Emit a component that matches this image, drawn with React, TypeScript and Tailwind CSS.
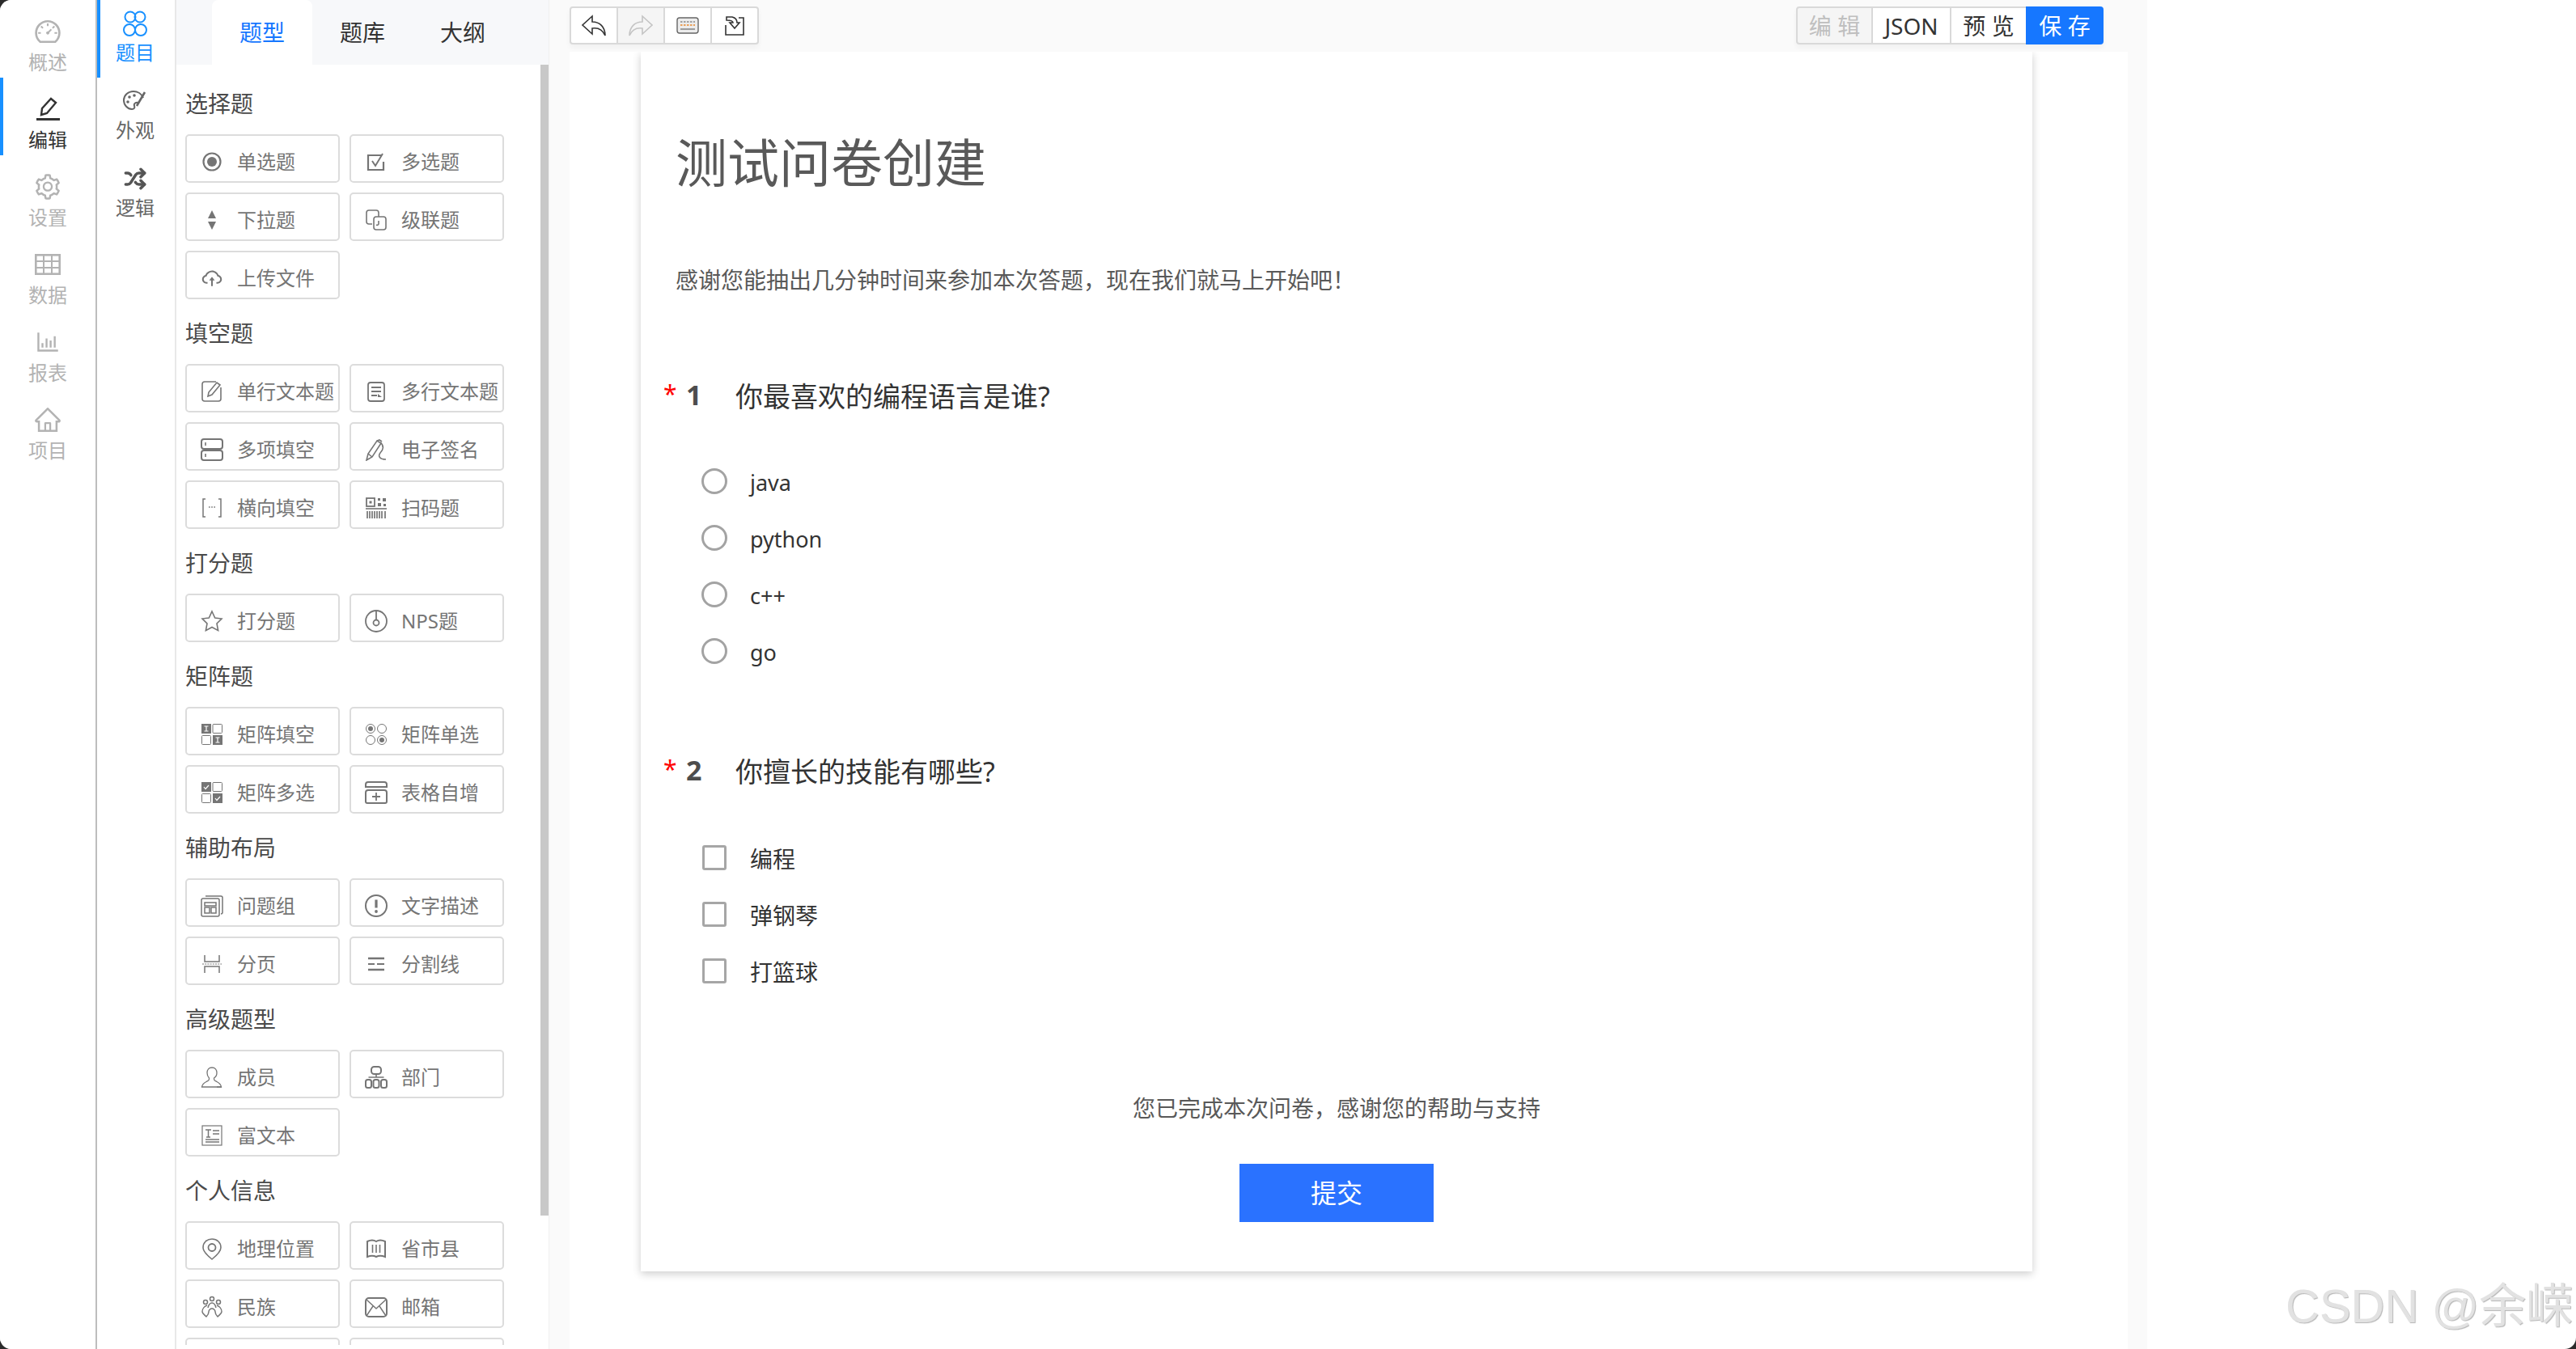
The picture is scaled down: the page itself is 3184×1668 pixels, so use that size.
import type { ReactNode } from 'react'
import {
  AiOutlineBarChart,
  AiOutlineCloudUpload,
  AiOutlineDashboard,
  AiOutlineHome,
  AiOutlineSetting,
} from 'react-icons/ai'
import { Shuffle } from 'lucide-react'

const g = '#757575'

const icons: Record<string, ReactNode> = {
  radio: (
    <>
      <circle cx="14" cy="14" r="10.5" strokeWidth="2.2" />
      <circle cx="14" cy="14" r="6" fill={g} stroke="none" />
    </>
  ),
  check: (
    <>
      <path d="M20 6H4v18h19V14" strokeWidth="2.2" />
      <path d="M9 13l4 6 9-15" strokeWidth="2" />
    </>
  ),
  select: <path d="M14 2l5 10H9zM14 26l5-10H9z" fill={g} stroke="none" />,
  cascade: (
    <>
      <path d="M9 19H5a3 3 0 0 1-3-3V5a3 3 0 0 1 3-3h9a3 3 0 0 1 3 3v5" />
      <rect x="11" y="10" width="15" height="16" rx="3" />
      <path d="M17 15v4a2 2 0 0 1-3 1" />
    </>
  ),
  pen: (
    <>
      <path d="M19 2H5a3 3 0 0 0-3 3v18a3 3 0 0 0 3 3h17a3 3 0 0 0 3-3V9" />
      <path d="M9 20l1-5L20 3l4 3-10 12z" />
    </>
  ),
  lines: (
    <>
      <rect x="4" y="3" width="20" height="23" rx="3" strokeWidth="1.8" />
      <path d="M8 9h12M8 14h12M8 19h7" strokeWidth="1.8" />
      <path d="M16 21h5l-5-4z" fill={g} stroke="none" />
    </>
  ),
  multi: (
    <>
      <rect x="1" y="1" width="26" height="12" rx="3" strokeWidth="2" />
      <rect x="1" y="15" width="26" height="12" rx="3" strokeWidth="2" />
      <path d="M6 5v4M6 19v4" />
    </>
  ),
  sign: (
    <>
      <path d="M2 27l2-8L15 3l5 3L9 23z" />
      <path d="M15 3l3-1 3 2M4 19l5 4" />
      <path d="M19 5c5 4 4 9 0 13-3 4-1 8 7 8" />
    </>
  ),
  blank: (
    <>
      <path d="M6 3H3v22h3M22 3h3v22h-3" strokeWidth="1.5" />
      <path d="M10 13h1.6M13.2 13h1.6M16.4 13h1.6" strokeWidth="1.6" />
    </>
  ),
  scan: (
    <>
      <rect x="2" y="2" width="10" height="10" strokeWidth="1.8" />
      <rect x="5.5" y="5.5" width="3" height="3" fill={g} stroke="none" />
      <path d="M16 2h3v3h-3zM22 2h4v4h-4zM16 8h4v4h-4zM23 9h3v3h-3z" fill={g} stroke="none" />
      <path d="M1 15h26" strokeWidth="1.6" />
      <path d="M3 18v9M6 18v9M9 18v9M12 18v9M15 18v9M18 18v9M21 18v9M25 18v9" strokeWidth="1.7" />
    </>
  ),
  star: <path d="M14 2l3.7 8 8.3 1-6 6 1.6 8.6L14 21.5 6.4 25.6 8 17l-6-6 8.3-1z" />,
  nps: (
    <>
      <circle cx="14" cy="14" r="13" strokeWidth="1.8" />
      <circle cx="14" cy="16" r="3.5" strokeWidth="1.8" />
      <path d="M14 1v11" strokeWidth="1.8" />
    </>
  ),
  mfill: (
    <>
      <rect x="1" y="1" width="12" height="12" fill={g} stroke="none" />
      <rect x="15" y="1.5" width="11.5" height="11" rx="1" strokeWidth="1" />
      <rect x="1.5" y="15.5" width="11" height="11" rx="1" strokeWidth="1" />
      <rect x="15" y="15" width="12" height="12" fill={g} stroke="none" />
      <path d="M4.5 4h5M7 4v6M4.5 10h5M18.5 18h5M21 18v6M18.5 24h5" stroke="#fff" strokeWidth="1.2" />
    </>
  ),
  mradio: (
    <>
      <circle cx="7" cy="7" r="5.5" strokeWidth="1" />
      <circle cx="7" cy="7" r="3" fill={g} stroke="none" />
      <circle cx="21" cy="7" r="5.5" strokeWidth="1" />
      <circle cx="7" cy="21" r="5.5" strokeWidth="1" />
      <circle cx="21" cy="21" r="5.5" strokeWidth="1" />
      <circle cx="21" cy="21" r="3" fill={g} stroke="none" />
    </>
  ),
  mcheck: (
    <>
      <rect x="1" y="1" width="12" height="12" fill={g} stroke="none" />
      <rect x="15" y="1.5" width="11.5" height="11" rx="1" strokeWidth="1" />
      <rect x="1.5" y="15.5" width="11" height="11" rx="1" strokeWidth="1" />
      <rect x="15" y="15" width="12" height="12" fill={g} stroke="none" />
      <path d="M4 7l2 2.5L10 5M18 21l2 2.5L24 19" stroke="#fff" strokeWidth="1.2" />
    </>
  ),
  grow: (
    <>
      <path d="M1 7V4a3 3 0 0 1 3-3h20a3 3 0 0 1 3 3v3z" strokeWidth="2" />
      <path d="M4 11h20a3 3 0 0 1 3 3v11a2 2 0 0 1-2 2H3a2 2 0 0 1-2-2V14a3 3 0 0 1 3-3z" strokeWidth="2" />
      <path d="M14 14v10M9 19h10" strokeWidth="1.8" />
    </>
  ),
  group: (
    <>
      <rect x="1" y="5" width="22" height="22" rx="2" strokeWidth="1.5" />
      <path d="M6 2h19a2 2 0 0 1 2 2v18a2 2 0 0 1-2 2" strokeWidth="1.5" />
      <path d="M5 10h14v4H5zM5 16h6v7H5zM13 16h6v7h-6z" strokeWidth="1.5" />
    </>
  ),
  notice: (
    <>
      <circle cx="14" cy="14" r="13" strokeWidth="2" />
      <path d="M14 6.5v10" strokeWidth="3.2" />
      <circle cx="14" cy="21" r="1.9" fill={g} stroke="none" />
    </>
  ),
  page: (
    <>
      <path d="M5 3v8h18V3M5 25v-8h18v8" strokeWidth="1.5" />
      <path d="M2 14h24" strokeWidth="1.2" strokeDasharray="2 1.2" />
    </>
  ),
  divider: (
    <>
      <path d="M4 7h20M4 21h20" strokeWidth="2.4" />
      <path d="M4 14h8M15 14h9" strokeWidth="2" />
    </>
  ),
  user: (
    <>
      <path d="M14 2c-4 0-6 3-6 6.500 0 3 1 5 2.500 6.500 0 3-.5 3-3.500 4.500-3 1.500-5 3-5.500 6.500h24c-.5-3.500-2.500-5-5.500-6.500-3-1.500-3.500-1.500-3.500-4.500C19 13.500 20 11.500 20 8.500 20 5 18 2 14 2z" strokeWidth="1.3" />
      <path d="M20 26h6" strokeWidth="1.3" />
    </>
  ),
  dept: (
    <>
      <rect x="8" y="1" width="12" height="9" rx="3.500" strokeWidth="2" />
      <path d="M4.500 14h19M14 10v4" strokeWidth="1.6" />
      <rect x="1" y="17" width="7" height="10" rx="2.500" strokeWidth="2" />
      <rect x="10.500" y="17" width="7" height="10" rx="2.500" strokeWidth="2" />
      <rect x="20" y="17" width="7" height="10" rx="2.500" strokeWidth="2" />
    </>
  ),
  rich: (
    <>
      <rect x="2" y="2" width="24" height="24" strokeWidth="1.2" />
      <path d="M6 7h7M9.500 7v9M7 16h5M15 8h8M15 12h8M6 19h17M6 22h17" strokeWidth="1.5" />
    </>
  ),
  pin: (
    <>
      <path d="M14 2C7.500 2 3 6.500 3 12.500 3 18 9 23 14 27c5-4 11-9 11-14.500C25 6.500 20.500 2 14 2z" strokeWidth="1.6" />
      <circle cx="14" cy="12.500" r="4.500" strokeWidth="1.8" />
    </>
  ),
  map: (
    <>
      <path d="M3 24V5c4-2 8-2 11 0 3-2 7-2 11 0v19c-4-1.500-8-1.500-11 0-3-1.500-7-1.500-11 0z" strokeWidth="2" />
      <path d="M9.500 9v10M14 9v10M18.500 9v10" strokeWidth="1.6" />
    </>
  ),
  people: (
    <>
      <circle cx="14" cy="4" r="2.500" strokeWidth="1.500" />
      <circle cx="6" cy="8" r="2.500" strokeWidth="1.500" />
      <circle cx="22" cy="8" r="2.500" strokeWidth="1.500" />
      <path d="M9 15c1-4 3-6 5-6s4 2 5 6" strokeWidth="1.500" />
      <path d="M8 12c-3 1-6 4-6 8 0 2 2 3 5 6 2-2 3-3 3-6 0-2 2-4 4-4s4 2 4 4c0 3 1 4 3 6 3-3 5-4 5-6 0-4-3-7-6-8" strokeWidth="1.500" />
    </>
  ),
  mail: (
    <>
      <rect x="1" y="3" width="26" height="23" rx="4" strokeWidth="2" />
      <path d="M2 5l12 11L26 5M2 25l8-12M26 25l-8-12" strokeWidth="1.5" />
    </>
  ),
}

function Ico({ name }: { name: string }) {
  if (!name) return null
  if (name === 'cloud') {
    return (
      <span className="w-[28px] h-[28px] flex items-center justify-center shrink-0">
        <AiOutlineCloudUpload size={28} color={g} />
      </span>
    )
  }
  return (
    <svg width="28" height="28" viewBox="0 0 28 28" fill="none" stroke={g} strokeWidth="1.6" className="shrink-0">
      {icons[name]}
    </svg>
  )
}

const sections: { title: string; items: [string, string][] }[] = [
  {
    title: '选择题',
    items: [
      ['单选题', 'radio'],
      ['多选题', 'check'],
      ['下拉题', 'select'],
      ['级联题', 'cascade'],
      ['上传文件', 'cloud'],
    ],
  },
  {
    title: '填空题',
    items: [
      ['单行文本题', 'pen'],
      ['多行文本题', 'lines'],
      ['多项填空', 'multi'],
      ['电子签名', 'sign'],
      ['横向填空', 'blank'],
      ['扫码题', 'scan'],
    ],
  },
  {
    title: '打分题',
    items: [
      ['打分题', 'star'],
      ['NPS题', 'nps'],
    ],
  },
  {
    title: '矩阵题',
    items: [
      ['矩阵填空', 'mfill'],
      ['矩阵单选', 'mradio'],
      ['矩阵多选', 'mcheck'],
      ['表格自增', 'grow'],
    ],
  },
  {
    title: '辅助布局',
    items: [
      ['问题组', 'group'],
      ['文字描述', 'notice'],
      ['分页', 'page'],
      ['分割线', 'divider'],
    ],
  },
  {
    title: '高级题型',
    items: [
      ['成员', 'user'],
      ['部门', 'dept'],
      ['富文本', 'rich'],
    ],
  },
  {
    title: '个人信息',
    items: [
      ['地理位置', 'pin'],
      ['省市县', 'map'],
      ['民族', 'people'],
      ['邮箱', 'mail'],
      // the next row is scrolled off, only its top border shows
      ['', ''],
      ['', ''],
    ],
  },
]

function MainNav() {
  const c = '#b3b3b3'
  const items: { label: string; icon: ReactNode; active?: boolean }[] = [
    { label: '概述', icon: <AiOutlineDashboard size={36} color={c} /> },
    {
      label: '编辑',
      active: true,
      icon: (
        <svg width="32" height="32" viewBox="0 0 32 32" fill="none" stroke="#333" strokeWidth="2.4">
          <path d="M8 23l1-8L20 3l6 5-11 13z" />
          <path d="M2 28.500h29" strokeWidth="2.800" />
        </svg>
      ),
    },
    { label: '设置', icon: <AiOutlineSetting size={36} color={c} /> },
    {
      label: '数据',
      icon: (
        <svg width="32" height="26" viewBox="0 0 32 26" fill="none" stroke={c} strokeWidth="2.600">
          <rect x="1.300" y="1.300" width="29.400" height="23.400" />
          <path d="M1 9h30M1 17h30M11 1v24M21 1v24" strokeWidth="2" />
        </svg>
      ),
    },
    { label: '报表', icon: <AiOutlineBarChart size={34} color={c} /> },
    { label: '项目', icon: <AiOutlineHome size={36} color={c} /> },
  ]
  return (
    <div className="w-[120px] shrink-0 border-r-2 border-[#bdbdbd] bg-white">
      {items.map((it) => (
        <div
          key={it.label}
          className={`h-24 flex flex-col items-center pt-[23px] border-l-4 pr-1 ${
            it.active ? 'border-[#1890ff] text-[#333]' : 'border-transparent text-[#b3b3b3]'
          }`}
        >
          <div className="h-8 flex items-center justify-center">{it.icon}</div>
          <div className="mt-[6px] text-[24px] leading-8">{it.label}</div>
        </div>
      ))}
    </div>
  )
}

function SubNav() {
  return (
    <div className="w-[98px] shrink-0 border-r-2 border-[#e8e8e8] bg-white">
      <div className="h-24 flex flex-col items-center pt-[13px] border-l-4 border-[#1890ff] pr-[6px] text-[#1890ff]">
        <svg width="32" height="32" viewBox="0 0 32 32" fill="none" stroke="#1890ff" strokeWidth="2">
          <circle cx="10" cy="8" r="6.500" />
          <circle cx="22" cy="8" r="6.500" />
          <circle cx="9" cy="24" r="7" />
          <circle cx="23" cy="24" r="7" />
        </svg>
        <div className="mt-1 text-[24px] leading-8">题目</div>
      </div>
      <div className="h-24 flex flex-col items-center pt-[13px] pl-1 pr-[6px] text-[#666]">
        <svg width="32" height="32" viewBox="0 0 32 32" fill="none" stroke="#666" strokeWidth="2">
          <path d="M26 12C24 7 19 4 14 4 7 4 2 9 2 15c0 6 5 11 10 11 3 0 4-2 3-4-1-3 2-5 5-4" />
          <path d="M28 5L18 22" strokeWidth="2.600" />
          <circle cx="9" cy="11" r="1.800" fill="#666" stroke="none" />
          <circle cx="15" cy="9" r="1.800" fill="#666" stroke="none" />
          <circle cx="7" cy="17" r="1.800" fill="#666" stroke="none" />
        </svg>
        <div className="mt-1 text-[24px] leading-8">外观</div>
      </div>
      <div className="h-24 flex flex-col items-center pt-[13px] pl-1 pr-[6px] text-[#666]">
        <div className="h-8 flex items-center justify-center">
          <Shuffle size={28} color="#555" strokeWidth={3} />
        </div>
        <div className="mt-1 text-[24px] leading-8">逻辑</div>
      </div>
    </div>
  )
}

function Palette() {
  return (
    <div className="w-[460px] shrink-0 flex flex-col bg-white">
      <div className="h-20 flex bg-[#f7f8fa] pl-[44px] shrink-0">
        <div className="w-[124px] flex items-center justify-center bg-white rounded-t-[8px] text-[#1677ff] text-[28px]">题型</div>
        <div className="w-[124px] flex items-center justify-center text-[#333] text-[28px]">题库</div>
        <div className="w-[124px] flex items-center justify-center text-[#333] text-[28px]">大纲</div>
      </div>
      <div className="flex items-start h-[1583px] overflow-hidden">
        <div className="w-[450px] shrink-0 pl-[11px] pt-[6px]">
          {sections.map((s) => (
            <div key={s.title}>
              <div className="h-20 flex items-center pt-1 text-[28px] leading-9 text-[#4a4a4a]">{s.title}</div>
              <div className="grid grid-cols-[191px_191px] gap-3">
                {s.items.map(([label, icon], i) => (
                  <div
                    key={i}
                    className="h-[60px] flex items-center pl-[17px] pt-2 border-2 border-[#dcdcdc] rounded-[5px] text-[24px] leading-8 text-[#757575] whitespace-nowrap"
                  >
                    <Ico name={icon} />
                    {label && <span className="ml-[17px]">{label}</span>}
                  </div>
                ))}
              </div>
            </div>
          ))}
        </div>
        <div className="w-[10px] h-[1423px] shrink-0 bg-[#c8c8c8]" />
      </div>
    </div>
  )
}

function Toolbar() {
  return (
    <div className="relative z-10 h-16 shrink-0 flex justify-between pt-2 pr-[30px] bg-[#fafafa]">
      <div className="w-[234px] h-[47px] flex border-2 border-[#d9d9d9] rounded-[4px] bg-white shadow-[0_4px_6px_rgba(0,0,0,0.04)]">
        <div className="flex-1 flex items-center justify-center border-r-2 border-[#d9d9d9]">
          <svg width="32" height="28" viewBox="0 0 32 28" fill="none" stroke="#333" strokeWidth="1.600">
            <path d="M14 2L2 13l12 11v-7c7-1 13 2 16 9 0-11-7-17-16-17z" />
          </svg>
        </div>
        <div className="flex-1 flex items-center justify-center border-r-2 border-[#d9d9d9] bg-[#f5f5f5]">
          <svg width="32" height="28" viewBox="0 0 32 28" fill="none" stroke="#c4c4c4" strokeWidth="1.600">
            <path d="M18 2l12 11-12 11v-7c-7-1-13 2-16 9 0-11 7-17 16-17z" />
          </svg>
        </div>
        <div className="flex-1 flex items-center justify-center border-r-2 border-[#d9d9d9]">
          <svg width="28" height="22" viewBox="0 0 28 22" fill="#ececec" stroke="#666" strokeWidth="1.400">
            <rect x="1" y="1" width="26" height="19" rx="3" />
            <path d="M5 6h18" fill="none" stroke="#888" strokeWidth="1.400" strokeDasharray="2.500 1.500" />
            <path d="M5 10h18" fill="none" stroke="#e8862a" strokeWidth="1.400" strokeDasharray="2.500 1.500" />
            <path d="M5 15h18" fill="none" stroke="#888" strokeWidth="1.600" />
          </svg>
        </div>
        <div className="flex-1 flex items-center justify-center">
          <svg width="26" height="26" viewBox="0 0 26 26" fill="none" stroke="#333" strokeWidth="1.600">
            <path d="M2 12v12h22V3h-6" />
            <path d="M3 2h7c4 1 6 3 6 7h3l-6 7-6-7h4c0-2-2-3-8-3z" />
          </svg>
        </div>
      </div>
      <div className="h-[47px] flex rounded-[4px] shadow-[0_4px_6px_rgba(0,0,0,0.04)] text-[28px] leading-[40px]">
        <div className="w-[95px] flex items-center justify-center border-2 border-[#d9d9d9] rounded-l-[4px] bg-[#f5f5f5] text-[#bfbfbf]">编 辑</div>
        <div className="w-[97px] flex items-center justify-center border-y-2 border-r-2 border-[#d9d9d9] bg-white text-[#333]">JSON</div>
        <div className="w-[92px] flex items-center justify-center border-y-2 border-[#d9d9d9] bg-white text-[#333]">预 览</div>
        <div className="w-[96px] flex items-center justify-center rounded-r-[4px] bg-[#1677ff] text-white">保 存</div>
      </div>
    </div>
  )
}

function Question({ no, text }: { no: number; text: string }) {
  return (
    <div className="h-12 flex items-center">
      <span className="w-[49px] pl-[28px] text-[30px] leading-none text-[#f00] -translate-y-[1px]">*</span>
      <span className="w-[68px] pl-[7px] text-[34px] leading-none font-bold text-[#4d4d4d]">{no}</span>
      <span className="pt-[3px] text-[34px] leading-[48px] text-[#333]">{text}</span>
    </div>
  )
}

function Survey() {
  return (
    <div className="h-[1508px] ml-[88px] mr-[118px] bg-white shadow-[0_3px_10px_rgba(0,0,0,0.2)]">
      <div className="pt-[97px] pl-[43px] text-[64px] leading-[80px] text-[#595959]">测试问卷创建</div>
      <div className="mt-[85px] pl-[43px] text-[28px] leading-10 text-[#595959]">
        感谢您能抽出几分钟时间来参加本次答题，现在我们就马上开始吧！
      </div>
      <div className="mt-[98px]">
        <Question no={1} text="你最喜欢的编程语言是谁?" />
      </div>
      <div className="mt-12">
        {['java', 'python', 'c++', 'go'].map((o) => (
          <div key={o} className="h-[70px] flex items-center pl-[75px]">
            <span className="w-8 h-8 rounded-full border-[3px] border-[#a3a3a3] bg-white" />
            <span className="ml-7 pt-1 text-[27px] leading-10 text-[#333]">{o}</span>
          </div>
        ))}
      </div>
      <div className="mt-[88px]">
        <Question no={2} text="你擅长的技能有哪些?" />
      </div>
      <div className="mt-[49px]">
        {['编程', '弹钢琴', '打篮球'].map((o) => (
          <div key={o} className="h-[70px] flex items-center pl-[76px]">
            <span className="w-[30px] h-[31px] rounded-[3px] border-[3px] border-[#a6a6a6] bg-white" />
            <span className="ml-[29px] pt-[3px] text-[28px] leading-10 text-[#333]">{o}</span>
          </div>
        ))}
      </div>
      <div className="mt-[115px] text-center text-[28px] leading-10 text-[#595959]">您已完成本次问卷，感谢您的帮助与支持</div>
      <div className="mt-[49px] w-[240px] h-[72px] mx-auto flex items-center justify-center bg-[#2a72ff] text-white text-[32px]">提交</div>
    </div>
  )
}

export default function App() {
  return (
    <div className="relative w-[3184px] h-[1668px] overflow-hidden bg-[#2b2b2b] [font-family:'Noto_Sans','Noto_Sans_CJK_SC',sans-serif]">
      <div className="w-full h-full flex bg-white overflow-hidden rounded-tl-[14px] rounded-bl-[14px] rounded-br-[14px]">
        <MainNav />
        <SubNav />
        <Palette />
        <div className="w-[1976px] shrink-0 flex flex-col pl-[25px] pr-[24px] bg-[#fafafa] border-l border-[#f0f0f0]">
          <Toolbar />
          <div className="flex-1 bg-white">
            <Survey />
          </div>
        </div>
      </div>
      <div className="absolute left-[2825px] top-[1575px] text-[58px] leading-[80px] text-[#e2e2e2] whitespace-nowrap [font-family:'Liberation_Sans','Noto_Sans_CJK_SC',sans-serif] [text-shadow:1px_1px_1px_#b5b5b5]">
        CSDN @余嵘
      </div>
    </div>
  )
}
